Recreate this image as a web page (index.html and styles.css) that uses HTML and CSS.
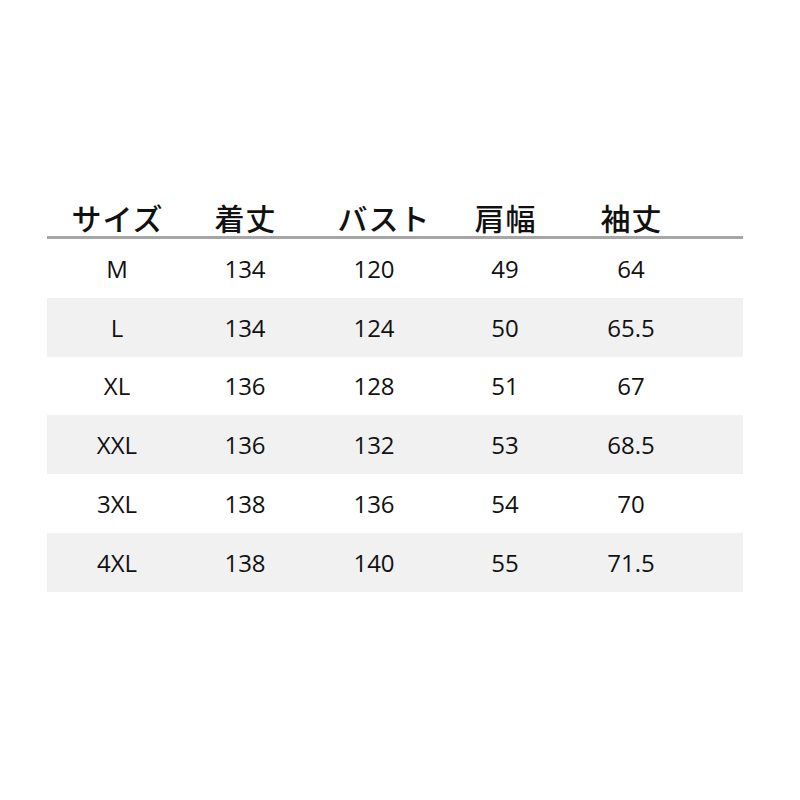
FILE: index.html
```html
<!DOCTYPE html>
<html lang="ja">
<head>
<meta charset="utf-8">
<link rel="stylesheet" href="styles.css">
</head>
<body>
<div class="table">
  <div class="row head">
    <div class="cell">サイズ</div>
    <div class="cell">着丈</div>
    <div class="cell shift">バスト</div>
    <div class="cell">肩幅</div>
    <div class="cell">袖丈</div>
    <div class="cell"></div>
  </div>
  <div class="row"><div class="cell">M</div><div class="cell">134</div><div class="cell">120</div><div class="cell">49</div><div class="cell">64</div><div class="cell"></div></div>
  <div class="row alt"><div class="cell">L</div><div class="cell">134</div><div class="cell">124</div><div class="cell">50</div><div class="cell">65.5</div><div class="cell"></div></div>
  <div class="row"><div class="cell">XL</div><div class="cell">136</div><div class="cell">128</div><div class="cell">51</div><div class="cell">67</div><div class="cell"></div></div>
  <div class="row alt"><div class="cell">XXL</div><div class="cell">136</div><div class="cell">132</div><div class="cell">53</div><div class="cell">68.5</div><div class="cell"></div></div>
  <div class="row"><div class="cell">3XL</div><div class="cell">138</div><div class="cell">136</div><div class="cell">54</div><div class="cell">70</div><div class="cell"></div></div>
  <div class="row alt"><div class="cell">4XL</div><div class="cell">138</div><div class="cell">140</div><div class="cell">55</div><div class="cell">71.5</div><div class="cell"></div></div>
</div>
</body>
</html>
```
FILE: styles.css
```css
html, body {
  margin: 0;
  padding: 0;
  background: #ffffff;
}
body {
  padding-top: 192px;
  padding-left: 47px;
}
.table {
  width: 696px;
}
.row {
  display: grid;
  grid-template-columns: 140px 116px 142px 120px 132px 46px;
  height: 58.8px;
  align-items: center;
  font-family: "Open Sans", "Noto Sans", sans-serif;
  font-size: 24px;
  color: #111111;
}
.row .cell {
  text-align: center;
}
.row.alt {
  background: #f1f1f1;
}
.row.head {
  height: 44px;
  align-items: end;
  border-bottom: 3px solid #a6a6a6;
  font-family: "Noto Sans CJK JP", sans-serif;
  font-weight: 500;
  font-size: 30px;
  color: #111111;
  line-height: 1;
}
.row.head .cell {
  letter-spacing: 1px;
  padding-left: 1px;
  padding-bottom: 4px;
}
.row.head .cell.shift {
  padding-left: 20px;
}
```
